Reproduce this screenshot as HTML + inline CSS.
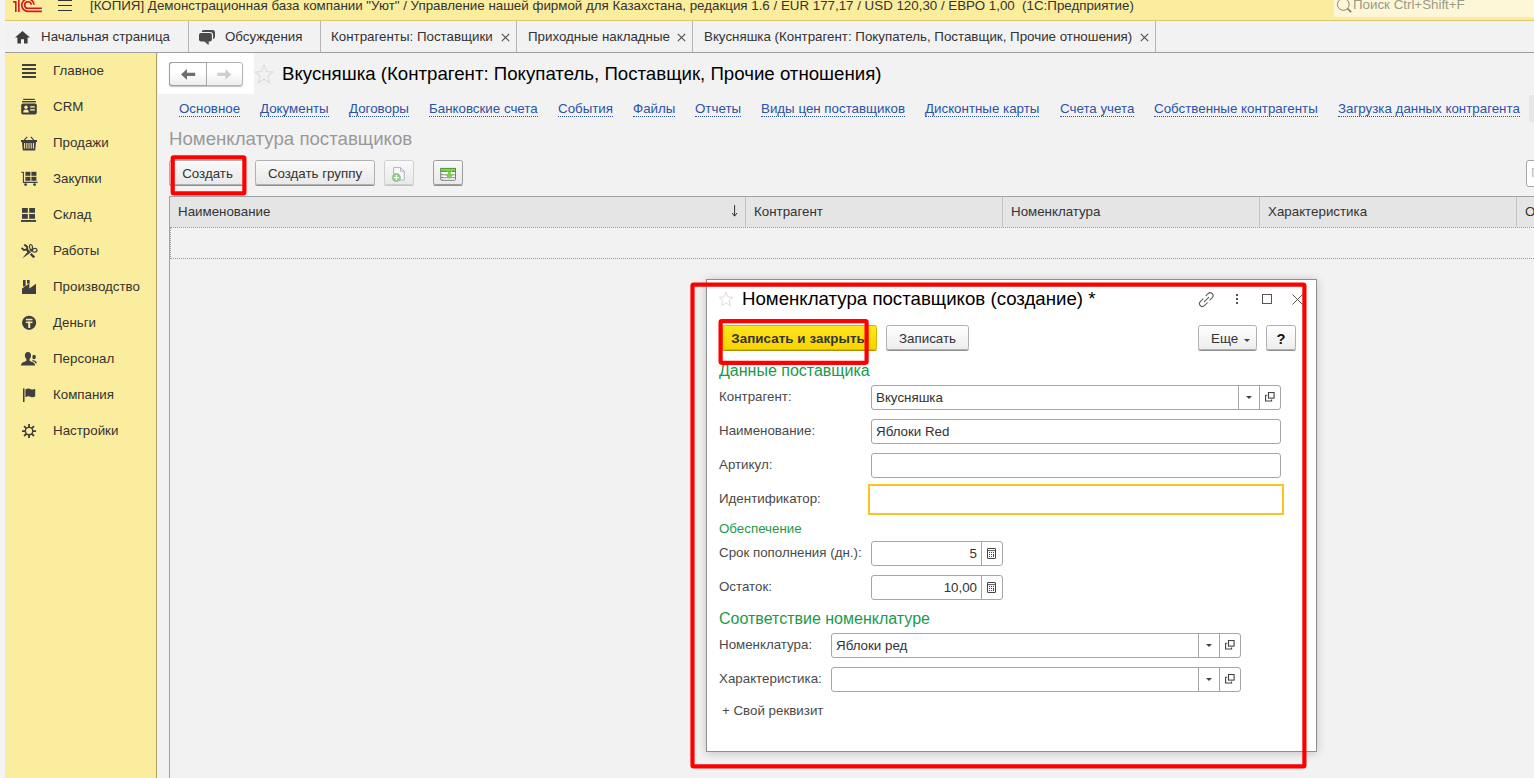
<!DOCTYPE html>
<html lang="ru">
<head>
<meta charset="utf-8">
<title>1С:Предприятие</title>
<style>
*{box-sizing:border-box;margin:0;padding:0}
html,body{width:1534px;height:778px;overflow:hidden;background:#f2f2f2}
body{position:relative;font-family:"Liberation Sans",Arial,sans-serif;font-size:13.33px;color:#333;line-height:16px}
.abs{position:absolute;white-space:nowrap}
#leftstrip{left:0;top:0;width:5px;height:778px;background:#f4f4f4}
#topbar{left:5px;top:0;width:1529px;height:21px;background:#fbed9e;border-bottom:1px solid #d9c96f}
#tabbar{left:5px;top:21px;width:1529px;height:32px;background:#f2f2f2;border-bottom:1px solid #9f9f9f}
#sidebar{left:5px;top:53px;width:152px;height:725px;background:#fbed9e;border-right:1px solid #a9a067}
.tab{top:21px;height:31px;border-right:1px solid #b5b5b5;line-height:31px;color:#333}
.side{left:53px;color:#333}
.dbtn{background:linear-gradient(#ffffff,#ededed) !important}
.btn{height:25px;border:1px solid #b0b0b0;border-radius:2.5px;background:linear-gradient(#f9f9f9,#e9e9e9);box-shadow:0 1px 0 #8f8f8f;text-align:center;line-height:25px;color:#333}
.link{top:100px;color:#2a53a5;border-bottom:1px dotted #2a53a5;line-height:16px;height:17px;padding-top:1px}
.inp{height:25px;border:1px solid #a6a6a6;border-radius:3px;background:#fff;line-height:24px;padding-left:4px;color:#333}
.sep{top:0;width:1px;height:23px;background:#a6a6a6}
.lbl{left:719px;color:#4a4a4a}
.grn{color:#1a9a4b}
</style>
</head>
<body>
<div id="leftstrip" class="abs"></div>
<div id="topbar" class="abs"></div>
<div id="tabbar" class="abs"></div>
<div id="sidebar" class="abs"></div>
<!-- top bar -->
<svg class="abs" style="left:0;top:0" width="50" height="14" viewBox="0 0 50 14">
 <g fill="none" stroke="#d9141c" stroke-width="1.6">
  <path d="M13.1 1.9 H15.8 V12"/>
  <path d="M18.85 -1 V12"/>
  <path d="M31.2 4.8 A3.25 3.25 0 1 0 28.05 8.3 H41.9"/>
  <path d="M34.1 4.8 A6.2 6.2 0 1 0 28.05 11.35 H41.9"/>
 </g>
</svg>
<div class="abs" style="left:58px;top:0;width:14px;height:1px;background:#333"></div>
<div class="abs" style="left:58px;top:5px;width:14px;height:1px;background:#333"></div>
<div class="abs" style="left:58px;top:10px;width:14px;height:1px;background:#333"></div>
<div class="abs" style="left:90px;top:-2px;color:#333;white-space:pre">[КОПИЯ] Демонстрационная база компании "Уют" / Управление нашей фирмой для Казахстана, редакция 1.6 / EUR 177,17 / USD 120,30 / ЕВРО 1,00  (1С:Предприятие)</div>
<div class="abs" style="left:1334px;top:0;width:200px;height:17px;background:#fdf7d8;border-radius:0 0 0 2px"></div>
<svg class="abs" style="left:1334px;top:0" width="20" height="16" viewBox="1334 0 20 16"><circle cx="1343.3" cy="4.4" r="5.9" fill="none" stroke="#8b8772" stroke-width="1"/><path d="M1347.8 8.9 L1350.6 11.5" stroke="#8b8772" stroke-width="1.9" stroke-linecap="round"/></svg>
<div class="abs" style="left:1353px;top:-3px;color:#9b9a88">Поиск Ctrl+Shift+F</div>

<!-- tabs -->
<div class="abs tab" style="left:5px;width:184px"></div>
<svg class="abs" style="left:15px;top:31px" width="15" height="13" viewBox="0 0 15 13"><path d="M7.5 0 L15 6.6 H12.6 V12.6 H9 V8.2 H6 V12.6 H2.4 V6.6 H0 Z" fill="#3d3d3d"/></svg>
<div class="abs" style="left:41px;top:29px">Начальная страница</div>
<div class="abs tab" style="left:189px;width:132px"></div>
<svg class="abs" style="left:196px;top:28px" width="22" height="20" viewBox="196 28 22 20"><rect x="201.6" y="30" width="13.4" height="9.2" rx="2.4" fill="#4a4a4a"/><rect x="199" y="33.1" width="12.9" height="8.5" rx="2" fill="#4a4a4a" stroke="#f2f2f2" stroke-width="2.4"/><rect x="199" y="33.1" width="12.9" height="8.5" rx="2" fill="#4a4a4a"/><path d="M204 41.3 L208.5 44.9 L208.9 41.3Z" fill="#4a4a4a"/></svg>
<div class="abs" style="left:225px;top:29px">Обсуждения</div>
<div class="abs tab" style="left:321px;width:196px"></div>
<div class="abs" style="left:331px;top:29px">Контрагенты: Поставщики</div>
<svg class="abs" style="left:500.5px;top:33px" width="9" height="9" viewBox="0 0 9 9"><path d="M0.8 0.8 L8.2 8.2 M8.2 0.8 L0.8 8.2" stroke="#4d4d4d" stroke-width="1.1" fill="none"/></svg>
<div class="abs tab" style="left:517px;width:176px"></div>
<div class="abs" style="left:528px;top:29px">Приходные накладные</div>
<svg class="abs" style="left:676.5px;top:33px" width="9" height="9" viewBox="0 0 9 9"><path d="M0.8 0.8 L8.2 8.2 M8.2 0.8 L0.8 8.2" stroke="#4d4d4d" stroke-width="1.1" fill="none"/></svg>
<div class="abs tab" style="left:693px;width:463px"></div>
<div class="abs" style="left:704px;top:29px">Вкусняшка (Контрагент: Покупатель, Поставщик, Прочие отношения)</div>
<svg class="abs" style="left:1139.5px;top:33px" width="9" height="9" viewBox="0 0 9 9"><path d="M0.8 0.8 L8.2 8.2 M8.2 0.8 L0.8 8.2" stroke="#4d4d4d" stroke-width="1.1" fill="none"/></svg>


<!-- sidebar -->
<div class="abs side" style="top:63px">Главное</div>
<div class="abs side" style="top:99px">CRM</div>
<div class="abs side" style="top:135px">Продажи</div>
<div class="abs side" style="top:171px">Закупки</div>
<div class="abs side" style="top:207px">Склад</div>
<div class="abs side" style="top:243px">Работы</div>
<div class="abs side" style="top:279px">Производство</div>
<div class="abs side" style="top:315px">Деньги</div>
<div class="abs side" style="top:351px">Персонал</div>
<div class="abs side" style="top:387px">Компания</div>
<div class="abs side" style="top:423px">Настройки</div>
<!-- icons -->
<svg class="abs" style="left:21px;top:63px" width="16" height="16" viewBox="0 0 16 16" fill="#3f3f3f"><rect x="1" y="1" width="14" height="2"/><rect x="1" y="5" width="14" height="2"/><rect x="1" y="9" width="14" height="2"/><rect x="1" y="13" width="14" height="2"/></svg>
<svg class="abs" style="left:21px;top:98px" width="16" height="17" viewBox="0 0 16 17"><rect x="2.2" y="0.8" width="11.6" height="1.2" fill="#3f3f3f"/><rect x="1" y="3" width="14" height="1.4" fill="#3f3f3f"/><rect x="0.2" y="5.4" width="15.6" height="11.2" rx="1.8" fill="#3f3f3f"/><circle cx="5" cy="9.2" r="1.7" fill="#fbed9e"/><path d="M2.2 14.4 Q2.2 11.4 5 11.4 Q7.8 11.4 7.8 14.4Z" fill="#fbed9e"/><rect x="9.2" y="8.2" width="4.6" height="1.4" fill="#fbed9e"/><rect x="9.2" y="11.2" width="4.6" height="1.4" fill="#fbed9e"/></svg>
<svg class="abs" style="left:21px;top:136px" width="16" height="15" viewBox="0 0 16 15"><path d="M3.2 4.2 L6.2 0.8 M12.8 4.2 L9.8 0.8" stroke="#3f3f3f" stroke-width="1.1" fill="none"/><rect x="0" y="4" width="16" height="2" fill="#3f3f3f"/><path d="M1 6 H15 L14.2 14.4 H1.8Z" fill="#3f3f3f"/><g fill="#fbed9e"><rect x="3.1" y="7" width="1" height="5.6"/><rect x="5.3" y="7" width="1" height="5.6"/><rect x="7.5" y="7" width="1" height="5.6"/><rect x="9.7" y="7" width="1" height="5.6"/><rect x="11.9" y="7" width="1" height="5.6"/></g></svg>
<svg class="abs" style="left:21px;top:171px" width="17" height="16" viewBox="0 0 17 16"><path d="M0.2 1.2 H2.4 V11.4 H16.6" stroke="#3f3f3f" stroke-width="1.1" fill="none"/><g fill="#3f3f3f"><rect x="4.4" y="0.8" width="5" height="4"/><rect x="10.4" y="0.8" width="5" height="4"/><rect x="4.4" y="5.8" width="5" height="4"/><rect x="10.4" y="5.8" width="5" height="4"/><circle cx="4.6" cy="13.6" r="1.4"/><circle cx="13.6" cy="13.6" r="1.4"/></g></svg>
<svg class="abs" style="left:21px;top:207px" width="16" height="16" viewBox="0 0 16 16" fill="#3f3f3f"><rect x="1" y="1" width="5.8" height="4.8"/><rect x="8.2" y="1" width="5.8" height="4.8"/><rect x="1" y="7" width="5.8" height="4.8"/><rect x="8.2" y="7" width="5.8" height="4.8"/><rect x="0" y="13" width="15" height="1.9"/></svg>
<svg class="abs" style="left:16px;top:238px" width="26" height="26" viewBox="16 238 26 26"><path d="M24.3 244.6 L27.2 246.7 V249.3 L23.9 250.1 L21.6 247.9" fill="none" stroke="#3f3f3f" stroke-width="2" stroke-linejoin="round"/><path d="M26.6 249.2 L28.6 251.6 M30.6 253.9 L34.3 257.3" stroke="#3f3f3f" stroke-width="2.3" fill="none"/><path d="M22.2 258.5 L28.9 250.1 L31 252.3Z" fill="#3f3f3f"/><ellipse cx="31.05" cy="247.1" rx="1.45" ry="2.6" fill="none" stroke="#3f3f3f" stroke-width="1.2" transform="rotate(-8 31.05 247.1)"/><ellipse cx="34.7" cy="250.25" rx="2.3" ry="1.85" fill="none" stroke="#3f3f3f" stroke-width="1.2" transform="rotate(-15 34.7 250.25)"/><path d="M30.4 249.6 L31.8 251.6" stroke="#3f3f3f" stroke-width="1.4"/></svg>
<svg class="abs" style="left:21px;top:279px" width="16" height="16" viewBox="0 0 16 16" fill="#3f3f3f"><path d="M1 15 V9.4 L8.4 4.6 V9.4 L15 4.8 V15Z"/><rect x="2" y="1" width="2.6" height="6.4"/><rect x="6" y="1" width="2.6" height="3.6"/></svg>
<svg class="abs" style="left:21px;top:315px" width="16" height="16" viewBox="0 0 16 16"><circle cx="8.1" cy="7.8" r="7.1" fill="#3f3f3f"/><rect x="4.9" y="3.8" width="6.6" height="1.5" fill="#fbed9e"/><rect x="4.9" y="6.6" width="6.6" height="1.5" fill="#fbed9e"/><rect x="7.2" y="6.6" width="2" height="6.4" fill="#fbed9e"/></svg>
<svg class="abs" style="left:20px;top:351px" width="18" height="16" viewBox="0 0 18 16" fill="#3f3f3f"><ellipse cx="7.95" cy="4.6" rx="3.05" ry="3.6"/><path d="M0.9 14.6 Q0.9 11.8 4.6 10.8 L6.4 9.8 V7.6 H9.6 V9.8 L11.4 10.8 Q15.1 11.8 15.1 14.6Z"/><ellipse cx="14.05" cy="6" rx="1.75" ry="2.2"/><path d="M12.4 8.6 Q13.4 9.8 14.8 9.5 Q16.7 10.4 17 12.3 L15.9 12.5 Q15 10.9 12.4 10Z"/></svg>
<svg class="abs" style="left:21px;top:387px" width="16" height="16" viewBox="0 0 16 16" fill="#3f3f3f"><rect x="2" y="1.4" width="1.5" height="13.6"/><path d="M4.4 2.6 Q7 0.6 9.4 2 Q12 3.2 14.2 1.8 V9.6 Q12 11 9.4 9.8 Q7 8.6 4.4 10.2Z"/></svg>
<svg class="abs" style="left:21px;top:423px" width="16" height="16" viewBox="0 0 16 16"><g stroke="#3f3f3f" stroke-width="1.8" stroke-linecap="butt"><path d="M8.04 1.05 V15.05 M1.04 8.04 H15.04 M3.1 3.1 L13 13 M13 3.1 L3.1 13"/></g><circle cx="8.04" cy="8.04" r="4.4" fill="#3f3f3f"/><circle cx="8.04" cy="8.04" r="3" fill="#fbed9e"/></svg>


<!-- main -->
<div class="abs" style="left:158px;top:53px;width:96px;height:41px;background:#fff"></div>
<div class="abs" style="left:169px;top:62px;width:74px;height:24px;border:1px solid #b4b4b4;border-radius:3px;background:linear-gradient(#fff 40%,#ededed);box-shadow:0 1px 1px rgba(0,0,0,.25)"></div>
<div class="abs" style="left:206px;top:62px;width:1px;height:24px;background:#a8a8a8"></div>
<div class="abs" style="left:169px;top:62px;width:38px;height:24px;border:1px solid #a0a0a0;border-radius:3px 0 0 3px;border-right:none"></div>
<svg class="abs" style="left:181px;top:69px" width="15" height="11" viewBox="0 0 15 11"><path d="M0 5.4 L6 0 V3.8 H14.2 V7 H6 V10.8Z" fill="#6e6e6e"/></svg>
<svg class="abs" style="left:217px;top:69px" width="15" height="11" viewBox="0 0 15 11"><path d="M14.4 5.4 L8.4 0 V3.8 H0.2 V7 H8.4 V10.8Z" fill="#cfcfcf"/></svg>
<svg class="abs" style="left:254px;top:64px" width="20" height="20" viewBox="0 0 20 20"><path d="M10 1.3 L12.5 7.6 L19 8 L14 12.3 L15.6 18.8 L10 15.2 L4.4 18.8 L6 12.3 L1 8 L7.5 7.6Z" fill="none" stroke="#dcdcdc" stroke-width="1.1" stroke-linejoin="miter"/></svg>
<div class="abs" style="left:282px;top:62.5px;font-size:18.67px;line-height:22px;color:#000">Вкусняшка (Контрагент: Покупатель, Поставщик, Прочие отношения)</div>
<div class="abs link" style="left:179px">Основное</div>
<div class="abs link" style="left:260px">Документы</div>
<div class="abs link" style="left:349px">Договоры</div>
<div class="abs link" style="left:429px">Банковские счета</div>
<div class="abs link" style="left:558px">События</div>
<div class="abs link" style="left:633px">Файлы</div>
<div class="abs link" style="left:695px">Отчеты</div>
<div class="abs link" style="left:761px">Виды цен поставщиков</div>
<div class="abs link" style="left:925px">Дисконтные карты</div>
<div class="abs link" style="left:1060px">Счета учета</div>
<div class="abs link" style="left:1154px">Собственные контрагенты</div>
<div class="abs link" style="left:1338px">Загрузка данных контрагента</div>
<div class="abs" style="left:1529px;top:95px;width:10px;height:27px;background:#e6e6e6;border-radius:3px"></div>
<div class="abs" style="left:169px;top:128px;font-size:18.67px;line-height:22px;color:#999">Номенклатура поставщиков</div>
<div class="abs btn" style="left:169px;top:160px;width:75px;padding-left:2px">Создать</div>
<div class="abs btn" style="left:255px;top:160px;width:120px">Создать группу</div>
<div class="abs btn" style="left:384px;top:160px;width:30px;border-color:#cfcfcf;box-shadow:0 1px 0 #c4c4c4"></div>
<svg class="abs" style="left:388px;top:163px" width="22" height="22" viewBox="388 163 22 22"><path d="M393.6 167.6 H400.6 L404.2 171.2 V180 H393.6Z" fill="#f9f9f9" stroke="#aab4c6" stroke-width="1"/><path d="M400.6 167.6 V171.2 H404.2" fill="none" stroke="#aab4c6" stroke-width="1"/><circle cx="396.4" cy="177.6" r="4.5" fill="#8ccb88"/><path d="M396.4 174.9 V180.3 M393.7 177.6 H399.1" stroke="#fff" stroke-width="1.3"/></svg>
<div class="abs btn" style="left:433px;top:160px;width:30px;border-color:#9c9c9c"></div>
<svg class="abs" style="left:436px;top:164px" width="24" height="20" viewBox="436 164 24 20"><rect x="440.7" y="171" width="14.8" height="9.3" rx="1" fill="#fff" stroke="#7d7d7d" stroke-width="1"/><path d="M441 174.8 H455 M441 177.7 H455" stroke="#7d7d7d" stroke-width="0.9"/><path d="M442.3 173.6 V175 M442.3 176.6 V178 M442.3 179.3 V180.3" stroke="#7d7d7d" stroke-width="0.9"/><rect x="440.7" y="168.4" width="14.8" height="3" fill="#84d15c" stroke="#4f962d" stroke-width="1"/><path d="M447.6 171.4 H450.9 V174.3 H453.8 L449.25 178.9 L444.7 174.3 H447.6Z" fill="#7fcc55"/><path d="M446.6 172.6 H447.6 M450.9 172.6 H452" stroke="#fff" stroke-width="2.2"/></svg>
<div class="abs" style="left:1526px;top:160px;width:20px;height:27px;border:1px solid #a6a6a6;border-radius:3px;background:#fff"></div>
<div class="abs" style="left:1531px;top:165px;color:#b8b8b8">П</div>
<!-- table -->
<div class="abs" style="left:170px;top:196px;width:1364px;height:31px;background:#e5e5e5;border-top:1px solid #a2a2a2"></div>
<div class="abs" style="left:169px;top:196px;width:1px;height:582px;background:#a2a2a2"></div>
<div class="abs" style="left:745px;top:197px;width:1px;height:30px;background:#c3c3c3"></div>
<div class="abs" style="left:1002px;top:197px;width:1px;height:30px;background:#c3c3c3"></div>
<div class="abs" style="left:1259px;top:197px;width:1px;height:30px;background:#c3c3c3"></div>
<div class="abs" style="left:1516px;top:197px;width:1px;height:30px;background:#c3c3c3"></div>
<div class="abs" style="left:178px;top:204px">Наименование</div>
<svg class="abs" style="left:731px;top:205px" width="8" height="12" viewBox="0 0 8 12"><path d="M3.6 0 V11 M1.2 8 L3.6 11.2 L6 8" fill="none" stroke="#333" stroke-width="1"/></svg>
<div class="abs" style="left:754px;top:204px">Контрагент</div>
<div class="abs" style="left:1011px;top:204px">Номенклатура</div>
<div class="abs" style="left:1268px;top:204px">Характеристика</div>
<div class="abs" style="left:1525px;top:204px">О</div>
<div class="abs" style="left:170px;top:227px;width:1370px;height:32px;border:1px dotted #9a9a9a"></div>


<!-- dialog -->
<div class="abs" style="left:706px;top:279px;width:611px;height:473px;background:#fff;border:1px solid #8e8e8e;box-shadow:0 1px 9px rgba(0,0,0,.2)"></div>
<svg class="abs" style="left:718px;top:291px" width="16" height="16" viewBox="0 0 16 16"><path d="M8 1.2 L9.9 6 L15 6.3 L11.1 9.6 L12.4 14.7 L8 11.9 L3.6 14.7 L4.9 9.6 L1 6.3 L6.1 6Z" fill="none" stroke="#dedede" stroke-width="1"/></svg>
<div class="abs" style="left:742px;top:288px;font-size:18.67px;line-height:22px;color:#000">Номенклатура поставщиков (создание) *</div>
<svg class="abs" style="left:1195px;top:288px" width="24" height="24" viewBox="1195 288 24 24"><g fill="none" stroke="#5a5a5a" stroke-width="1.05" stroke-linecap="round"><path d="M1206 295.7 L1208.15 293.55 A2.9 2.9 0 0 1 1212.25 297.65 L1210 299.9"/><path d="M1208.8 297.3 L1204.3 301.6"/><path d="M1203 298.8 L1200.25 301.55 A2.9 2.9 0 0 0 1204.35 305.65 L1207.2 302.8"/></g></svg>
<div class="abs" style="left:1236px;top:294px;width:2px;height:2px;background:#555"></div>
<div class="abs" style="left:1236px;top:298px;width:2px;height:2px;background:#555"></div>
<div class="abs" style="left:1236px;top:302px;width:2px;height:2px;background:#555"></div>
<div class="abs" style="left:1262px;top:294px;width:10px;height:10px;border:1px solid #555"></div>
<svg class="abs" style="left:1292px;top:294px" width="11" height="11" viewBox="0 0 11 11"><path d="M0.5 0.5 L10.5 10.5 M10.5 0.5 L0.5 10.5" stroke="#555" stroke-width="1" fill="none"/></svg>

<div class="abs" style="left:722px;top:325px;width:155px;height:25px;border:1px solid #d6b800;border-radius:2.5px;background:linear-gradient(#ffe51e,#f7d400);box-shadow:0 1px 0 #a89000;text-align:center;line-height:25px;color:#333;font-weight:bold;letter-spacing:0.08px;padding-right:3px">Записать и закрыть</div>
<div class="abs btn dbtn" style="left:886px;top:325px;width:83px">Записать</div>
<div class="abs btn dbtn" style="left:1198px;top:325px;width:59px"></div>
<div class="abs" style="left:1211px;top:331px">Еще</div>
<svg class="abs" style="left:1244px;top:338.6px" width="6" height="3" viewBox="0 0 6 3"><path d="M0 0 H6 L3 3Z" fill="#444"/></svg>
<div class="abs btn dbtn" style="left:1266px;top:325px;width:30px;font-weight:bold;font-size:14.67px;color:#111;line-height:27px">?</div>

<div class="abs grn" style="left:719px;top:362px;font-size:16px;line-height:18px">Данные поставщика</div>
<div class="abs lbl" style="top:389px">Контрагент:</div>
<div class="abs inp" style="left:871px;top:385px;width:410px">Вкусняшка</div>
<div class="abs" style="left:1238px;top:386px;width:1px;height:23px;background:#a6a6a6"></div>
<div class="abs" style="left:1259px;top:386px;width:1px;height:23px;background:#a6a6a6"></div>
<svg class="abs" style="left:1246.0px;top:396.0px" width="6" height="3" viewBox="0 0 6 3"><path d="M0 0 H6 L3 3Z" fill="#444"/></svg>
<svg class="abs" style="left:1265px;top:392px" width="10" height="10" viewBox="0 0 10 10"><rect x="3.5" y="0.5" width="5.6" height="5.6" fill="#fff" stroke="#444" stroke-width="1.1"/><path d="M2.2 3.2 H0.6 V9 H6.6 V7.4" fill="none" stroke="#444" stroke-width="1.1"/></svg>

<div class="abs lbl" style="top:423px">Наименование:</div>
<div class="abs inp" style="left:871px;top:419px;width:410px">Яблоки Red</div>
<div class="abs lbl" style="top:457px">Артикул:</div>
<div class="abs inp" style="left:871px;top:453px;width:410px"></div>
<div class="abs lbl" style="top:491px">Идентификатор:</div>
<div class="abs" style="left:868px;top:484px;width:416px;height:31px;border:2px solid #f9c524;background:#fff"></div>
<div class="abs grn" style="left:719px;top:521px">Обеспечение</div>
<div class="abs lbl" style="top:545px">Срок пополнения (дн.):</div>
<div class="abs inp" style="left:871px;top:541px;width:132px"></div>
<div class="abs" style="left:871px;top:546px;width:106px;text-align:right;color:#333">5</div>
<div class="abs" style="left:981px;top:542px;width:1px;height:23px;background:#a6a6a6"></div>
<svg class="abs" style="left:986px;top:547px" width="12" height="13" viewBox="0 0 12 13"><rect x="1.5" y="1.5" width="8" height="10" rx="0.4" fill="#fff" stroke="#444" stroke-width="1"/><path d="M1.5 3.6 H9.5" stroke="#444" stroke-width="0.9"/><g fill="#444"><rect x="3" y="5" width="1" height="1"/><rect x="5" y="5" width="1" height="1"/><rect x="7" y="5" width="1" height="1"/><rect x="3" y="7" width="1" height="1"/><rect x="5" y="7" width="1" height="1"/><rect x="7" y="7" width="1" height="3"/><rect x="3" y="9" width="1" height="1"/><rect x="5" y="9" width="1" height="1"/></g></svg>

<div class="abs lbl" style="top:579px">Остаток:</div>
<div class="abs inp" style="left:871px;top:575px;width:132px"></div>
<div class="abs" style="left:871px;top:580px;width:106px;text-align:right;color:#333">10,00</div>
<div class="abs" style="left:981px;top:576px;width:1px;height:23px;background:#a6a6a6"></div>
<svg class="abs" style="left:986px;top:581px" width="12" height="13" viewBox="0 0 12 13"><rect x="1.5" y="1.5" width="8" height="10" rx="0.4" fill="#fff" stroke="#444" stroke-width="1"/><path d="M1.5 3.6 H9.5" stroke="#444" stroke-width="0.9"/><g fill="#444"><rect x="3" y="5" width="1" height="1"/><rect x="5" y="5" width="1" height="1"/><rect x="7" y="5" width="1" height="1"/><rect x="3" y="7" width="1" height="1"/><rect x="5" y="7" width="1" height="1"/><rect x="7" y="7" width="1" height="3"/><rect x="3" y="9" width="1" height="1"/><rect x="5" y="9" width="1" height="1"/></g></svg>

<div class="abs grn" style="left:719px;top:610px;font-size:16px;line-height:18px">Соответствие номенклатуре</div>
<div class="abs lbl" style="top:637px">Номенклатура:</div>
<div class="abs inp" style="left:831px;top:633px;width:410px">Яблоки ред</div>
<div class="abs" style="left:1198px;top:634px;width:1px;height:23px;background:#a6a6a6"></div>
<div class="abs" style="left:1219px;top:634px;width:1px;height:23px;background:#a6a6a6"></div>
<svg class="abs" style="left:1206.0px;top:644.0px" width="6" height="3" viewBox="0 0 6 3"><path d="M0 0 H6 L3 3Z" fill="#444"/></svg>
<svg class="abs" style="left:1225px;top:640px" width="10" height="10" viewBox="0 0 10 10"><rect x="3.5" y="0.5" width="5.6" height="5.6" fill="#fff" stroke="#444" stroke-width="1.1"/><path d="M2.2 3.2 H0.6 V9 H6.6 V7.4" fill="none" stroke="#444" stroke-width="1.1"/></svg>

<div class="abs lbl" style="top:671px">Характеристика:</div>
<div class="abs inp" style="left:831px;top:667px;width:410px"></div>
<div class="abs" style="left:1198px;top:668px;width:1px;height:23px;background:#a6a6a6"></div>
<div class="abs" style="left:1219px;top:668px;width:1px;height:23px;background:#a6a6a6"></div>
<svg class="abs" style="left:1206.0px;top:678.0px" width="6" height="3" viewBox="0 0 6 3"><path d="M0 0 H6 L3 3Z" fill="#444"/></svg>
<svg class="abs" style="left:1225px;top:674px" width="10" height="10" viewBox="0 0 10 10"><rect x="3.5" y="0.5" width="5.6" height="5.6" fill="#fff" stroke="#444" stroke-width="1.1"/><path d="M2.2 3.2 H0.6 V9 H6.6 V7.4" fill="none" stroke="#444" stroke-width="1.1"/></svg>

<div class="abs" style="left:722px;top:703px;color:#4a4a4a">+ Свой реквизит</div>

<!-- red annotation boxes -->
<svg class="abs" style="left:0;top:0" width="1534" height="778" viewBox="0 0 1534 778"><g fill="none" stroke="#ff0000" stroke-width="4.2">
<rect x="172.7" y="157.3" width="71.7" height="36.1" rx="1.2"/>
<rect x="720.6" y="321.2" width="146" height="41.6" rx="1.2"/>
<rect x="692.5" y="284.7" width="611.9" height="481.7" rx="1.2"/>
</g></svg>
</body>
</html>
